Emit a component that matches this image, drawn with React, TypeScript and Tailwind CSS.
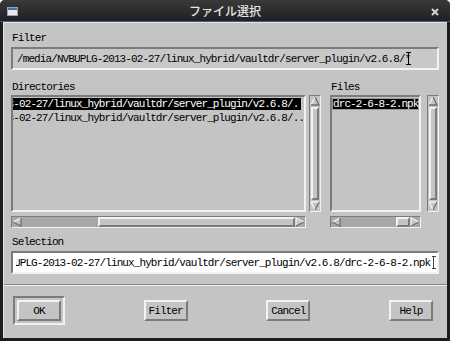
import React from "react";

// Motif-style bevels
const sunken = "border-2 border-t-[#7b7b7b] border-l-[#7b7b7b] border-b-[#f2f2f2] border-r-[#f2f2f2]";
const sunken1 = "border border-t-[#7b7b7b] border-l-[#7b7b7b] border-b-[#f2f2f2] border-r-[#f2f2f2]";
const raised = "border-2 border-t-[#f2f2f2] border-l-[#f2f2f2] border-b-[#7b7b7b] border-r-[#7b7b7b]";

const mono = "font-['Liberation_Mono','DejaVu_Sans_Mono',monospace] text-[11px] tracking-[-0.9px] leading-[12px] text-black";

function Arrow({ dir }: { dir: "up" | "down" | "left" | "right" }) {
  const pts = {
    up: { p: "5,1 9,9 1,9", light: "M1 9 L5 1", dark: "M5 1 L9 9 L1 9" },
    down: { p: "1,1 9,1 5,9", light: "M1 1 L9 1 M1 1 L5 9", dark: "M9 1 L5 9" },
    left: { p: "1,5 9,1 9,9", light: "M1 5 L9 1", dark: "M9 1 L9 9 L1 5" },
    right: { p: "1,1 9,5 1,9", light: "M1 9 L1 1 L9 5", dark: "M9 5 L1 9" },
  }[dir];
  return (
    <svg width="10" height="10" viewBox="0 0 10 10" className="shrink-0">
      <polygon points={pts.p} fill="#c4c4c4" />
      <path d={pts.light} stroke="#f4f4f4" strokeWidth="1.3" fill="none" />
      <path d={pts.dark} stroke="#6e6e6e" strokeWidth="1.3" fill="none" />
    </svg>
  );
}

function VScroll() {
  return (
    <div className={`flex w-[12px] flex-col bg-[#c4c4c4] ${sunken1}`}>
      <Arrow dir="up" />
      <div className={`mx-[1px] my-[1px] flex-1 ${raised}`} />
      <Arrow dir="down" />
    </div>
  );
}

function HScroll({ trough, thumb }: { trough: number; thumb: string }) {
  return (
    <div className={`flex h-[12px] items-center bg-[#a8a8a8] ${sunken1}`}>
      <Arrow dir="left" />
      <div className="h-full" style={{ width: trough }} />
      <div className={`h-full bg-[#c4c4c4] ${raised} ${thumb}`} />
      <Arrow dir="right" />
    </div>
  );
}

function Button({ label }: { label: string }) {
  return (
    <div className={`flex h-[21px] w-[44px] items-center justify-center bg-[#c4c4c4] ${raised} ${mono}`}>
      {label}
    </div>
  );
}

export default function App() {
  const dir = "/media/NVBUPLG-2013-02-27/linux_hybrid/vaultdr/server_plugin/v2.6.8/";
  return (
    <div className="flex h-[341px] w-[450px] flex-col overflow-hidden rounded-t-[5px] bg-[#1c1c1c]">
      {/* title bar */}
      <div className="relative flex h-[21px] shrink-0 items-center justify-center bg-gradient-to-b from-[#3a3a3a] to-[#202020]">
        <div className="absolute left-[7px] top-[7px] h-[9px] w-[11px] border border-[#9aa4b0] bg-[#e8e8e8]">
          <div className="h-[2px] bg-[#3d6fb8]" />
        </div>
        <span className="font-['Noto_Sans_CJK_JP',sans-serif] text-[12px] font-medium text-[#e6e6e6]">
          ファイル選択
        </span>
        <svg className="absolute right-[11px] top-[8px]" width="8" height="8" viewBox="0 0 8 8">
          <path d="M1 1 L7 7 M7 1 L1 7" stroke="#d4d4d4" strokeWidth="2" />
        </svg>
      </div>
      <div className="h-[1px] shrink-0 bg-[#3f5f8f]" />

      {/* body */}
      <div className="mx-[3px] mb-[3px] flex flex-1 flex-col border-l border-t border-[#e4e4e4] bg-[#c4c4c4]">
        <div className="flex flex-col pl-[7px] pr-[8px]">
          <div className={`mt-[9px] pl-[1px] ${mono}`}>Filter</div>
          <div className={`mt-[3px] flex h-[23px] items-center overflow-hidden bg-[#c8c8c8] pl-[4px] ${sunken} ${mono}`}>
            <span className="whitespace-nowrap">{dir}*</span>
            <span className="-ml-[4px] flex h-[13px] w-[5px] flex-col items-center justify-between">
              <span className="h-[1px] w-[5px] bg-black" />
              <span className="w-[1px] flex-1 bg-black" />
              <span className="h-[1px] w-[5px] bg-black" />
            </span>
          </div>

          <div className="mt-[11px] flex">
            <div className="flex w-[310px] flex-col">
              <div className={`pl-[1px] ${mono}`}>Directories</div>
              <div className="mt-[2px] flex gap-[3px]">
                <div className={`h-[117px] w-[295px] overflow-hidden pt-[1px] ${sunken} ${mono}`}>
                  <div className="h-[12px] w-[288px] overflow-hidden whitespace-nowrap bg-black text-white">
                    <span className="-ml-[108px]">{dir}.</span>
                  </div>
                  <div className="mt-[2px] h-[12px] whitespace-nowrap">
                    <span className="-ml-[108px]">{dir}..</span>
                  </div>
                </div>
                <VScroll />
              </div>
              <div className="mt-[4px] w-[295px]">
                <HScroll trough={76} thumb="flex-1" />
              </div>
            </div>

            <div className="ml-[9px] flex flex-col">
              <div className={`pl-[1px] ${mono}`}>Files</div>
              <div className="mt-[2px] flex gap-[6px]">
                <div className={`h-[117px] w-[91px] overflow-hidden pt-[1px] ${sunken} ${mono}`}>
                  <div className="h-[12px] w-full overflow-hidden whitespace-nowrap bg-black pl-[1px] text-white shadow-[inset_0_0_0_1px_#9a9a9a]">
                    drc-2-6-8-2.npk
                  </div>
                </div>
                <VScroll />
              </div>
              <div className="mt-[4px] w-[91px]">
                <HScroll trough={58} thumb="w-[14px]" />
              </div>
            </div>
          </div>

          <div className={`mt-[8px] pl-[1px] ${mono}`}>Selection</div>
          <div className={`mt-[3px] flex h-[23px] items-center bg-white pl-[3px] ${sunken}`}>
            <div className={`flex flex-1 items-center overflow-hidden ${mono}`}>
              <span className="-ml-[59px] whitespace-nowrap">
                /media/NVBUPLG-2013-02-27/linux_hybrid/vaultdr/server_plugin/v2.6.8/drc-2-6-8-2.npk
              </span>
              <span className="ml-[1px] flex h-[13px] w-[5px] flex-col items-center justify-between">
                <span className="h-[1px] w-[4px] bg-[#444]" />
                <span className="w-[1px] flex-1 bg-[#444]" />
                <span className="h-[1px] w-[4px] bg-[#444]" />
              </span>
            </div>
          </div>
        </div>

        {/* separator */}
        <div className="mt-[10px] border-b border-t border-b-[#f0f0f0] border-t-[#858585]" />

        {/* buttons */}
        <div className="mt-[10px] flex items-center justify-between pl-[9px] pr-[14px]">
          <div className={`p-[2px] ${sunken}`}>
            <Button label="OK" />
          </div>
          <Button label="Filter" />
          <Button label="Cancel" />
          <Button label="Help" />
        </div>
      </div>
    </div>
  );
}
